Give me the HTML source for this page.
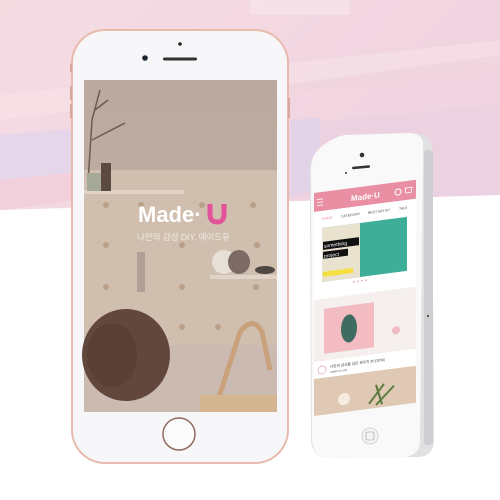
<!DOCTYPE html>
<html><head><meta charset="utf-8"><style>
html,body{margin:0;padding:0;width:500px;height:500px;overflow:hidden;background:#fff}
svg{display:block}
text{font-family:"Liberation Sans","Noto Sans CJK KR",sans-serif}
</style></head><body>
<svg width="500" height="500" viewBox="0 0 500 500">
<defs>
<linearGradient id="bg" x1="0" y1="0" x2="1" y2="0.4">
<stop offset="0" stop-color="#f4dbe2"/><stop offset="0.5" stop-color="#f3d8e2"/><stop offset="1" stop-color="#efd3df"/></linearGradient>
<linearGradient id="wall" x1="0" y1="0" x2="0" y2="1">
<stop offset="0" stop-color="#bba89e"/><stop offset="1" stop-color="#c6b3a7"/></linearGradient>
</defs>
<polygon points="0,0 500,0 500,195 0,210" fill="url(#bg)"/>
<polygon points="0,135 80,128 80,195 0,205" fill="#e6d6e9"/>
<polygon points="280,125 500,105 500,195 280,198" fill="#ecd2e0"/>
<polygon points="290,120 320,118 320,190 290,195" fill="#e2d3e8"/>
<polygon points="0,95 500,40 500,60 0,120" fill="#f6e2e8" opacity="0.6"/>
<rect x="250" y="0" width="100" height="15" fill="#f8e6ec" opacity="0.7"/>
<polygon points="280,85 500,55 500,70 280,95" fill="#f0d5df" opacity="0.8"/>
<polygon points="0,180 80,172 80,200 0,210" fill="#f2d0db"/>

<!-- big phone -->
<rect x="71" y="29" width="218" height="435" rx="34" fill="#e8b9ad"/>
<rect x="73" y="31" width="214" height="431" rx="32" fill="#f7f7f9"/>
<rect x="70" y="64" width="2" height="8" fill="#d9a79b"/>
<rect x="70" y="86" width="2" height="14" fill="#d9a79b"/>
<rect x="70" y="104" width="2" height="14" fill="#d9a79b"/>
<rect x="288" y="98" width="2" height="20" fill="#d9a79b"/>
<circle cx="180" cy="44" r="1.8" fill="#222"/>
<circle cx="145" cy="58" r="2.8" fill="#1c2430"/>
<rect x="163" y="57.5" width="34" height="3" rx="1.5" fill="#333"/>
<rect x="84" y="80" width="193" height="332" fill="url(#wall)"/>
<rect x="84" y="170" width="193" height="175" fill="#d0beae"/>
<rect x="84" y="345" width="193" height="67" fill="#cbbab2"/>
<rect x="84" y="190" width="100" height="4" fill="#e0d4c8"/>
<rect x="210" y="275" width="67" height="4" fill="#e0d4c8"/>
<g fill="#b9a088">
<circle cx="106" cy="205" r="3"/><circle cx="141" cy="205" r="3"/><circle cx="202" cy="205" r="3"/><circle cx="253" cy="205" r="3"/>
<circle cx="106" cy="245" r="3"/><circle cx="182" cy="245" r="3"/><circle cx="257" cy="245" r="3"/>
<circle cx="106" cy="287" r="3"/><circle cx="182" cy="287" r="3"/><circle cx="256" cy="287" r="3"/>
<circle cx="182" cy="327" r="3"/><circle cx="218" cy="327" r="3"/></g>
<path d="M88 183 L92 120 L100 90 M92 140 L125 123 M95 110 L108 100" stroke="#6c5a52" stroke-width="1.5" fill="none"/>
<rect x="101" y="163" width="10" height="28" fill="#5a4a40"/>
<rect x="87" y="173" width="14" height="18" fill="#a6a898"/>
<ellipse cx="224" cy="262" rx="12" ry="12" fill="#e6e0d8"/>
<ellipse cx="239" cy="262" rx="11" ry="12" fill="#7b6a66"/>
<ellipse cx="265" cy="270" rx="10" ry="4" fill="#4e4844"/>
<ellipse cx="126" cy="355" rx="44" ry="46" fill="#62473c"/>
<ellipse cx="112" cy="355" rx="25" ry="32" fill="#5a3f35"/>
<path d="M218 400 L240 332 Q253 315 262 332 L270 370" stroke="#c9a27c" stroke-width="5" fill="none"/>
<rect x="200" y="395" width="77" height="17" fill="#d4b692"/>
<rect x="137" y="252" width="8" height="40" fill="#b1a098"/>
<text x="138" y="222" font-size="22" font-weight="bold" fill="#fff">Made·</text>
<path d="M210 204 L210 214 Q210 222 217 222 Q224 222 224 214 L224 204" stroke="#e2549a" stroke-width="5" fill="none"/>
<text x="137" y="240" font-size="8.5" fill="#f2ece8">나만의 감성 DIY, 메이드유</text>
<circle cx="179" cy="434" r="16" fill="#fbfbfb" stroke="#8f6b60" stroke-width="1.5"/>

<!-- small phone -->
<path d="M318 150 Q330 138 345 135 L412 133 Q428 133 432 145 L434 440 Q434 455 420 457 L330 458 Q312 458 311 440 L310 170 Q310 157 318 150Z" fill="#e1e1e3"/>
<path d="M318 150 Q330 138 345 135 L410 133 Q425 134 423 148 L420 440 Q420 455 405 457 L330 458 Q313 458 312 440 L311 170 Q311 157 318 150Z" fill="#f9f9f9"/>
<rect x="424" y="150" width="9" height="295" rx="3" fill="#cfcfd1"/>
<circle cx="362" cy="155" r="2.3" fill="#333"/>
<rect x="352" y="166" width="18" height="2.5" rx="1" fill="#333" transform="rotate(-5 361 167)"/>
<circle cx="346" cy="173" r="1" fill="#333"/>
<circle cx="428" cy="316" r="1" fill="#333"/>
<g transform="matrix(1,-0.13,0,1,314,193)">
<rect x="0" y="0" width="102" height="19" fill="#e98fa4"/>
<rect x="0" y="19" width="102" height="204" fill="#fff"/>
<path d="M3 7h6M3 10h6M3 13h6" stroke="#fff" stroke-width="0.8"/>
<text x="37" y="13" font-size="8" font-weight="bold" fill="#fff">Made·U</text>
<circle cx="84" cy="10" r="3" stroke="#fff" fill="none"/>
<path d="M91 7h7l-1 5h-5z" stroke="#fff" fill="none" stroke-width="0.8"/>
<text x="7" y="28" font-size="3.5" fill="#e9849d">TODAY</text>
<text x="27" y="28" font-size="3.5" fill="#555">CATEGORY</text>
<text x="54" y="28" font-size="3.5" fill="#555">BEST ARTIST</text>
<text x="85" y="28" font-size="3.5" fill="#555">TALK</text>
<rect x="8" y="36" width="85" height="54" fill="#3fae98"/>
<rect x="8" y="36" width="38" height="54" fill="#e8e2cf"/>
<rect x="9" y="50" width="36" height="8" fill="#111"/>
<text x="10" y="56" font-size="5" fill="#fff" font-family="Liberation Mono">something</text>
<rect x="9" y="60" width="25" height="7" fill="#111"/>
<text x="10" y="66" font-size="5" fill="#fff" font-family="Liberation Mono">project</text>
<rect x="9" y="80" width="30" height="5" fill="#f6e040"/>
<g fill="#e98fa4"><circle cx="40" cy="94" r="0.8"/><circle cx="44" cy="94" r="0.8"/><circle cx="48" cy="94" r="0.8"/><circle cx="52" cy="94" r="0.8"/></g>
<rect x="0" y="107" width="102" height="62" fill="#f5efed"/>
<rect x="10" y="117" width="50" height="45" fill="#f2bcc2"/>
<ellipse cx="35" cy="140" rx="8" ry="14" fill="#3e6c60"/>
<circle cx="82" cy="148" r="4" fill="#f0b8c2"/>
<circle cx="8" cy="178" r="4" fill="none" stroke="#e98fa4" stroke-width="0.6"/>
<text x="16" y="177" font-size="3.6" fill="#333">나만의 감성을 담은 파우치 20 [30%]</text>
<text x="16" y="182" font-size="3" fill="#666">made by you</text>
<rect x="0" y="186" width="102" height="37" fill="#dfc9b4"/>
<path d="M55 218 L70 200 M62 220 L80 203 M68 220 L62 200" stroke="#5b7a3d" stroke-width="2"/>
<circle cx="30" cy="210" r="6" fill="#f5ecdf"/>
</g>
<rect x="362" y="428" width="16" height="16" rx="8" fill="#f4f4f4" stroke="#ccc" stroke-width="0.8"/>
<rect x="366" y="432" width="8" height="8" rx="1.5" fill="none" stroke="#999" stroke-width="0.6"/>
</svg>
</body></html>
